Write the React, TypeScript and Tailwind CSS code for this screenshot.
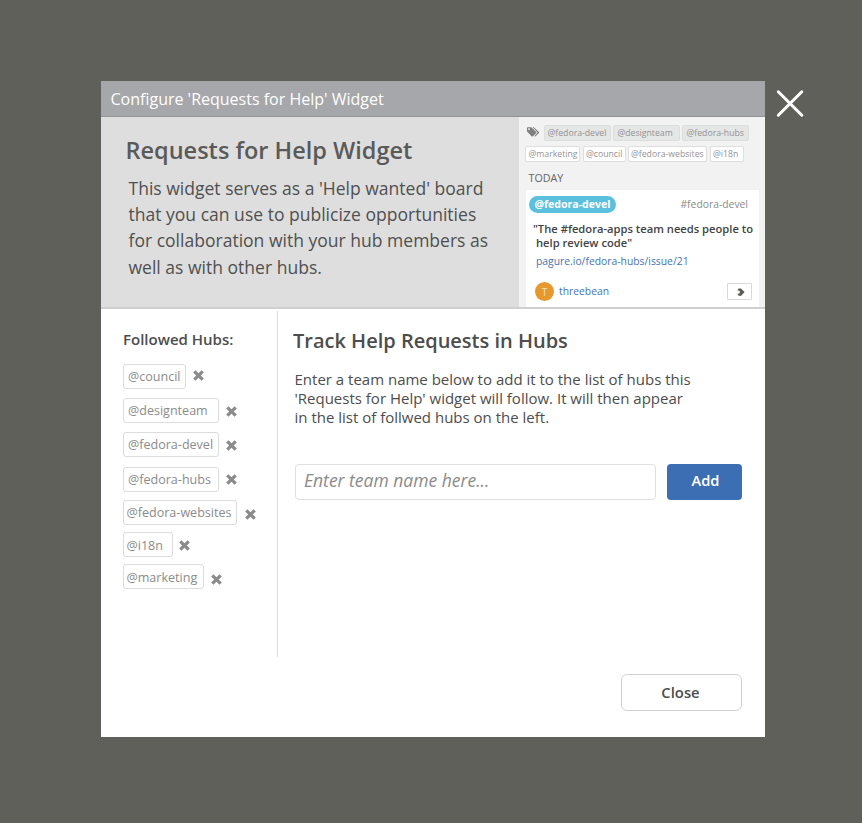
import React from "react";

const hubs = [
  { name: "@council", box: "w-[63px] pl-[4px]", gap: "ml-[6.5px]", row: "mt-[15px]", x: "mb-[2px]", text: "pt-[2px]" },
  { name: "@designteam", box: "w-[96px] pl-[4px]", gap: "ml-[7px]", row: "mt-[9px]", x: "mt-[1px]", text: "pt-[2px]" },
  { name: "@fedora-devel", box: "w-[96px] pl-[4px]", gap: "ml-[7px]", row: "mt-[9px]", x: "mt-[1px]", text: "pt-[2px]" },
  { name: "@fedora-hubs", box: "w-[96px] pl-[4px]", gap: "ml-[7px]", row: "mt-[10px]", x: "mb-[1px]", text: "pt-[1px]" },
  { name: "@fedora-websites", box: "w-[114px] pl-[2.5px]", gap: "ml-[8px]", row: "mt-[8px]", x: "mt-[3px]", text: "pt-[2px]" },
  { name: "@i18n", box: "w-[50px] pl-[2.5px]", gap: "ml-[6px]", row: "mt-[7px]", x: "mt-[1px]", text: "pt-[3px]" },
  { name: "@marketing", box: "w-[81px] pl-[2.5px]", gap: "ml-[7px]", row: "mt-[7px]", x: "mt-[5px]", text: "pt-[3px]" },
];

function RemoveIcon() {
  return (
    <svg className="h-[11px] w-[11px]" viewBox="0 0 11 11" fill="none" stroke="#8b8b8b" strokeWidth="3.2">
      <path d="M1.3 1.3 9.7 9.7M9.7 1.3 1.3 9.7" />
    </svg>
  );
}

function Tag({ children, className }: { children: string; className: string }) {
  return (
    <span className={"flex h-[16px] shrink-0 items-center rounded-[2px] border pt-[2px] whitespace-nowrap text-[#939393] " + className}>
      {children}
    </span>
  );
}

function Preview() {
  return (
    <div className="flex h-[190px] w-[246px] flex-col bg-[#f2f2f2] pl-[6px]">
      <div className="mt-[7px] flex h-[17px] items-center text-[8.7px]">
        <svg className="mt-[-2px] ml-[2px] h-[10px] w-[12px]" viewBox="0 0 12 10" fill="#7f7f7f">
          <path fillRule="evenodd" d="M0 0.8 0.6 0.2 4.3 0.2 9.2 5 9.2 5.9 5.7 9.5 4.8 9.5 0 4.6ZM2 1.2a.9.9 0 1 0 .01 0Z" />
          <path d="M5.6.2h1.2L12 5v.9L8.3 9.6 7.3 9.3l3.2-3.7Z" />
        </svg>
        <Tag className="ml-[5px] w-[67px] border-[#dcdddd] bg-[#e5e6e6] pl-[2.5px]">@fedora-devel</Tag>
        <Tag className="ml-[2px] w-[67px] border-[#dcdddd] bg-[#e5e6e6] pl-[3.5px]">@designteam</Tag>
        <Tag className="ml-[2px] w-[67px] border-[#dcdddd] bg-[#e5e6e6] pl-[3.5px]">@fedora-hubs</Tag>
      </div>
      <div className="mt-[4px] flex h-[17px] items-center text-[8.7px]">
        <Tag className="w-[55px] border-[#dedede] bg-white pl-[2.5px]">@marketing</Tag>
        <Tag className="ml-[3px] w-[43px] border-[#dedede] bg-white pl-[2px]">@council</Tag>
        <Tag className="ml-[2px] w-[79px] border-[#dedede] bg-white pl-[2px]">@fedora-websites</Tag>
        <Tag className="ml-[3px] w-[34px] border-[#dedede] bg-white pl-[2px]">@i18n</Tag>
      </div>
      <div className="mt-[8px] ml-[3.5px] h-[16px] text-[10.7px] leading-[16px] text-[#646464]">TODAY</div>
      <div className="mt-[4px] ml-px h-[117px] w-[233px] bg-white">
        <div className="flex h-[29px] items-center justify-between pr-[11px] pl-[3px]">
          <span className="flex h-[17px] w-[87px] items-center justify-center rounded-full bg-[#5bc0de] text-[10.6px] font-bold text-white">@fedora-devel</span>
          <span className="text-[10.35px] text-[#8b8b8b]">#fedora-devel</span>
        </div>
        <p className="mt-[3px] pl-[7px] text-[11.2px] leading-[14px] font-semibold whitespace-nowrap text-[#434343]">
          "The #fedora-apps team needs people to
          <br />
          <span className="ml-[3px]">help review code"</span>
        </p>
        <p className="mt-[3px] pl-[10px] text-[10.35px] leading-[16px] text-[#4672b4]">pagure.io/fedora-hubs/issue/21</p>
        <div className="mt-[13px] flex h-[19px] items-center pr-[7px] pl-[9px]">
          <span className="flex h-[19px] w-[19px] items-center justify-center rounded-full bg-[#e5982d] pt-[2px] text-[10px] text-[#fbe3bd]">T</span>
          <span className="ml-[5px] text-[10.35px] text-[#4672b4]">threebean</span>
          <span className="ml-auto flex h-[17px] w-[25px] items-center justify-center rounded-[1px] border border-[#d8d8d8]">
            <svg className="mt-px ml-[2px] h-[8px] w-[8px]" viewBox="0 0 8 8" fill="#5c5d57">
              <path d="M1.4.4H4L7.6 4.1 4 7.9 1.2 7.6.5 5.7 2.4 5.4 2.9 4.1 2.4 2.8.5 2.6Z" />
            </svg>
          </span>
        </div>
      </div>
    </div>
  );
}

export default function App() {
  return (
    <div className="flex h-[823px] w-[862px] items-start bg-[#5f6059] pt-[81px] pl-[101px] font-['Open_Sans','Noto_Sans',sans-serif] text-[#4d4d4d]">
      <div className="flex h-[656px] w-[664px] shrink-0 flex-col bg-white">
        <header className="h-[36px] border-b border-[#929496] bg-[#a6a7ab] pl-[9.5px] text-[16px] leading-[37px] whitespace-nowrap text-white">
          Configure 'Requests for Help' Widget
        </header>
        <section className="flex h-[192px] border-b-2 border-[#cfcfcf] bg-[#dedede]">
          <div className="w-[418px] whitespace-nowrap">
            <h1 className="mt-[17px] ml-[24.5px] text-[23.5px] leading-[32px] font-semibold text-[#5a5a5a]">Requests for Help Widget</h1>
            <p className="mt-[9px] ml-[27.5px] text-[17.55px] leading-[26.2px] text-[#505050]">
              This widget serves as a 'Help wanted' board
              <br />
              that you can use to publicize opportunities
              <br />
              for collaboration with your hub members as
              <br />
              well as with other hubs.
            </p>
          </div>
          <Preview />
        </section>
        <div className="flex h-[348px] pt-[2px]">
          <aside className="w-[177px] border-r border-[#dfdfdf] pl-[22px]">
            <h2 className="mt-[18px] h-[20px] text-[15px] leading-[20px] font-semibold">Followed Hubs:</h2>
            {hubs.map((h) => (
              <div key={h.name} className={"flex h-[25px] items-center " + h.row}>
                <span className={"flex h-[25px] items-center rounded-[3px] border border-[#dcdcdc] text-[12.55px] whitespace-nowrap text-[#8b8b8b] " + h.box + " " + h.text}>{h.name}</span>
                <span className={h.gap + " " + h.x}>
                  <RemoveIcon />
                </span>
              </div>
            ))}
          </aside>
          <main className="whitespace-nowrap">
            <h2 className="mt-[16px] ml-[15px] text-[20px] leading-[28px] font-semibold">Track Help Requests in Hubs</h2>
            <p className="mt-[15px] ml-[16.5px] text-[15px] leading-[19px]">
              Enter a team name below to add it to the list of hubs this
              <br />
              'Requests for Help' widget will follow. It will then appear
              <br />
              in the list of follwed hubs on the left.
            </p>
            <div className="mt-[37px] ml-[17px] flex gap-[11px]">
              <input
                className="h-[36px] w-[361px] rounded-[4px] border border-[#dfdfdf] pr-2 pb-[4px] pl-[8px] text-[17.5px] italic outline-none placeholder:text-[#8b8b8b]"
                placeholder="Enter team name here..."
              />
              <button className="h-[36px] w-[75px] rounded-[4px] bg-[#3c6eb4] pb-[3px] pl-[2px] text-[14.7px] font-semibold text-white">Add</button>
            </div>
          </main>
        </div>
        <footer className="flex justify-end pt-[17px] pr-[23px]">
          <button className="h-[37px] w-[121px] rounded-[6px] border border-[#d2d2d2] pr-[2px] text-[14.8px] font-semibold">Close</button>
        </footer>
      </div>
      <svg className="mt-[8px] ml-[11px] h-[29px] w-[29px] shrink-0" viewBox="0 0 29 29" stroke="white" strokeWidth="3" strokeLinecap="round">
        <path d="M2.3 2.8 25.8 26.2M25.8 2.8 2.3 26.2" />
      </svg>
    </div>
  );
}
